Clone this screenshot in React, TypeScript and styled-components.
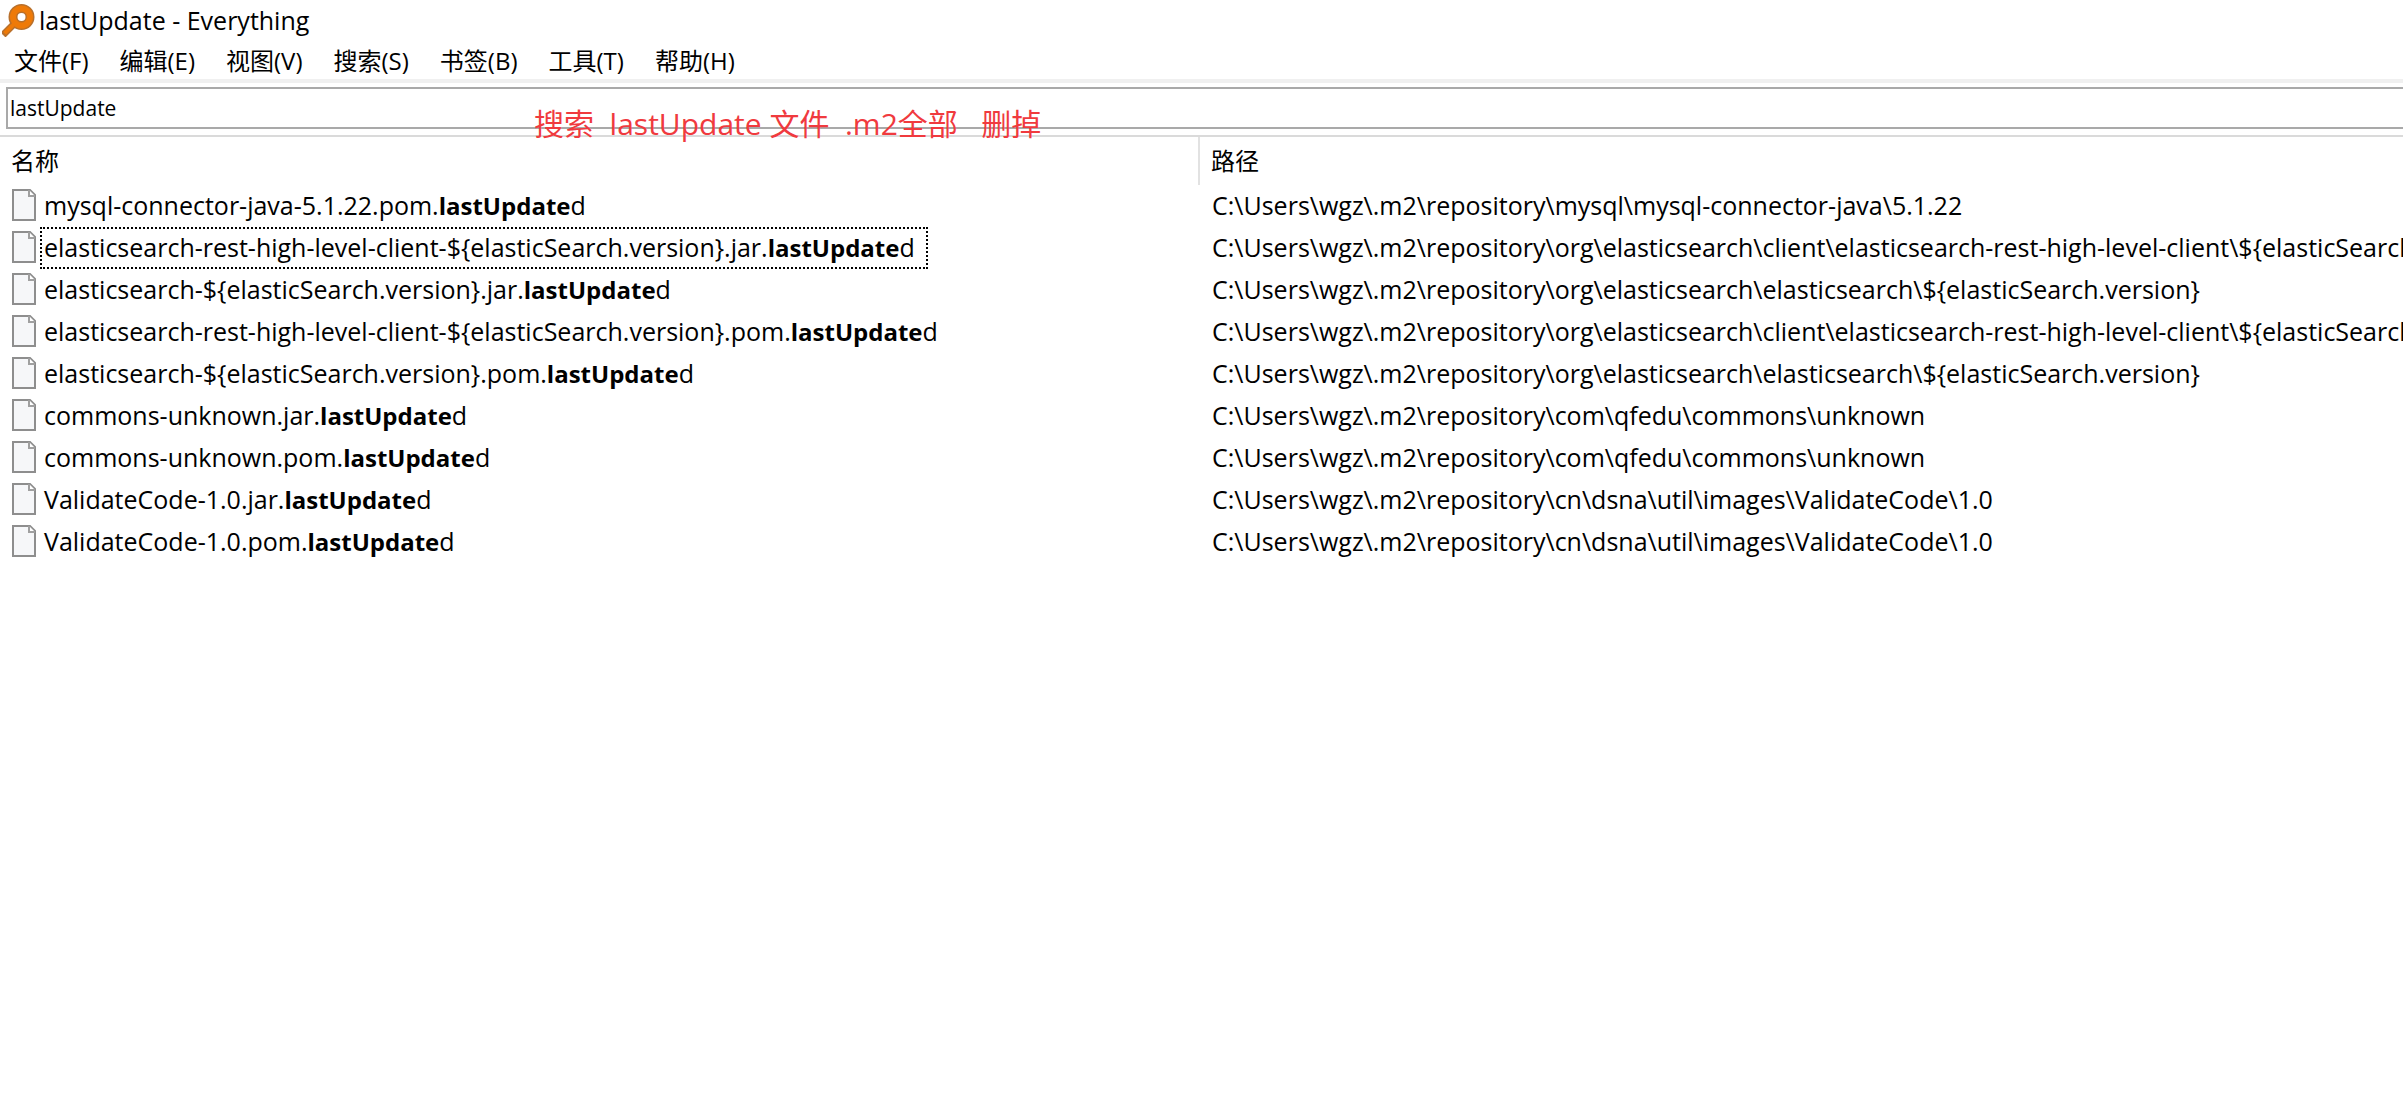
import React, { useState } from "react";
import styled, { createGlobalStyle } from "styled-components";

const GlobalStyle = createGlobalStyle`
  body {
    margin: 0;
    background: #fff;
    color: #000;
    font-family: "Open Sans", "Noto Sans CJK SC", sans-serif;
    font-size: 24px;
    overflow: hidden;
  }
`;

const Window = styled.main`
  position: relative;
  display: flex;
  flex-direction: column;
`;

const TitleBar = styled.header`
  display: flex;
  align-items: center;
  gap: 4px;
  height: 40px;
  padding-left: 2px;
`;

const Title = styled.h1`
  margin: 0;
  font-size: 25px;
  font-weight: 400;
  line-height: 40px;
`;

const MenuBar = styled.nav`
  display: flex;
  gap: 3px;
  height: 39px;
  border-bottom: 4px solid #f0f0f0;
`;

const MenuItem = styled.button`
  padding: 2px 14px 0;
  border: 0;
  background: none;
  color: inherit;
  font-family: inherit;
  font-size: 24px;
  line-height: 38px;
  white-space: nowrap;

  &:hover {
    background: #e5f3ff;
  }
`;

const SearchBar = styled.div`
  display: flex;
  padding: 4px 0 6px 6px;
  border-bottom: 2px solid #dadada;
`;

const SearchInput = styled.input`
  box-sizing: border-box;
  flex: 1;
  height: 42px;
  padding: 0 2px;
  border: 2px solid #a9a9a9;
  border-right: 0;
  outline: 0;
  background: #fff;
  color: #000;
  font-family: inherit;
  font-size: 21px;
`;

const Note = styled.p`
  position: absolute;
  top: 104px;
  left: 534px;
  margin: 0;
  color: #f03a3e;
  font-size: 30px;
  line-height: 40px;
  white-space: pre;
  pointer-events: none;
`;

const Results = styled.table`
  width: 100%;
  table-layout: fixed;
  border-collapse: separate;
  border-spacing: 0;
`;

const NameColumn = styled.col`
  width: 1200px;
`;

const HeadCell = styled.th<{ $divided?: boolean }>`
  box-sizing: border-box;
  height: 48px;
  padding: 0 11px;
  border-right: ${(p) => (p.$divided ? "2px solid #e2e2e2" : "0")};
  font-weight: 400;
  line-height: 48px;
  text-align: left;
`;

const Cell = styled.td`
  height: 42px;
  padding: 0 12px;
  overflow: hidden;
  font-size: 25px;
  line-height: 40px;
  vertical-align: top;
  white-space: nowrap;
`;

const FileEntry = styled.div`
  display: flex;
  align-items: center;
  gap: 4px;
`;

const FileName = styled.span<{ $focused?: boolean }>`
  box-sizing: border-box;
  height: 42px;
  padding: 0 11px 0 2px;
  border: 2px dotted ${(p) => (p.$focused ? "#000" : "transparent")};
  line-height: 36px;
`;

const Match = styled.b`
  font-size: 24px;
`;

const AppIcon = () => (
  <svg width="33" height="34" viewBox="0 0 33 34" aria-hidden="true">
    <path d="M12 21 3.500 29.500" stroke="#b8702c" strokeWidth="7" strokeLinecap="square" />
    <circle cx="19.500" cy="14" r="8.500" fill="#fff" stroke="#b8702c" strokeWidth="9" />
    <path d="M13 20 4 29" stroke="#ee7a08" strokeWidth="4" strokeLinecap="square" />
    <circle cx="19.500" cy="14" r="8.500" fill="none" stroke="#ee7a08" strokeWidth="6" />
  </svg>
);

const FileIcon = () => (
  <svg width="24" height="34" viewBox="0 0 24 34" aria-hidden="true">
    <path d="M1 1H18L23 6V31H1Z" fill="#f6f7f9" stroke="#8e8e8e" strokeWidth="2" />
    <path d="M17 1V7H23" fill="#fff" stroke="#a0a0a0" strokeWidth="2" />
  </svg>
);

const menus = ["文件(F)", "编辑(E)", "视图(V)", "搜索(S)", "书签(B)", "工具(T)", "帮助(H)"];

const REPO = "C:\\Users\\wgz\\.m2\\repository\\";
const REST = REPO + "org\\elasticsearch\\client\\elasticsearch-rest-high-level-client\\${elasticSearch.version}";
const CORE = REPO + "org\\elasticsearch\\elasticsearch\\${elasticSearch.version}";
const COMMONS = REPO + "com\\qfedu\\commons\\unknown";
const VALIDATE = REPO + "cn\\dsna\\util\\images\\ValidateCode\\1.0";

const files = [
  { name: "mysql-connector-java-5.1.22.pom.", path: REPO + "mysql\\mysql-connector-java\\5.1.22" },
  { name: "elasticsearch-rest-high-level-client-${elasticSearch.version}.jar.", path: REST },
  { name: "elasticsearch-${elasticSearch.version}.jar.", path: CORE },
  { name: "elasticsearch-rest-high-level-client-${elasticSearch.version}.pom.", path: REST },
  { name: "elasticsearch-${elasticSearch.version}.pom.", path: CORE },
  { name: "commons-unknown.jar.", path: COMMONS },
  { name: "commons-unknown.pom.", path: COMMONS },
  { name: "ValidateCode-1.0.jar.", path: VALIDATE },
  { name: "ValidateCode-1.0.pom.", path: VALIDATE },
];

export default function App() {
  const [query, setQuery] = useState("lastUpdate");
  const [focused, setFocused] = useState(1);

  return (
    <Window>
      <GlobalStyle />
      <TitleBar>
        <AppIcon />
        <Title>lastUpdate - Everything</Title>
      </TitleBar>
      <MenuBar>
        {menus.map((menu) => (
          <MenuItem key={menu} type="button">{menu}</MenuItem>
        ))}
      </MenuBar>
      <SearchBar>
        <SearchInput
          aria-label="搜索"
          value={query}
          spellCheck={false}
          onChange={(e) => setQuery(e.target.value)}
        />
      </SearchBar>
      <Results>
        <colgroup>
          <NameColumn />
          <col />
        </colgroup>
        <thead>
          <tr>
            <HeadCell $divided>名称</HeadCell>
            <HeadCell>路径</HeadCell>
          </tr>
        </thead>
        <tbody>
          {files.map((file, i) => (
            <tr key={file.name} onClick={() => setFocused(i)}>
              <Cell>
                <FileEntry>
                  <FileIcon />
                  <FileName $focused={i === focused}>
                    {file.name}
                    <Match>lastUpdate</Match>d
                  </FileName>
                </FileEntry>
              </Cell>
              <Cell>{file.path}</Cell>
            </tr>
          ))}
        </tbody>
      </Results>
      <Note>{"搜索  lastUpdate 文件  .m2全部   删掉"}</Note>
    </Window>
  );
}
